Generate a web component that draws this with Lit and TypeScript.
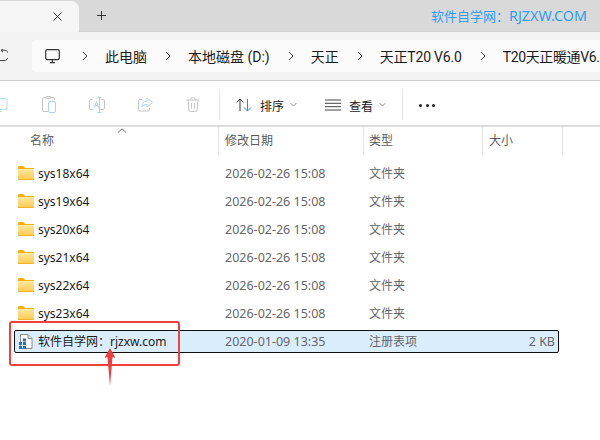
import { LitElement, html, css, svg } from "lit";
import { customElement } from "lit/decorators.js";

const folder = svg`<svg width="16" height="16" viewBox="0 0 16 16"><defs><linearGradient id="fg" x1="0" y1="0" x2="0" y2="1"><stop offset="0" stop-color="#ffe9a0"/><stop offset="1" stop-color="#fcc94e"/></linearGradient></defs><path d="M0 2.2C0 1.5.5 1 1.2 1h4l2 2H16v2H0z" fill="#f6b10f"/><path d="M0 4h16v10.2c0 .5-.4.8-.8.8H.8c-.5 0-.8-.4-.8-.8z" fill="url(#fg)"/><path d="M0 14h16v.4c0 .4-.3.6-.7.6H.7c-.4 0-.7-.3-.7-.6z" fill="#f2b124"/></svg>`;

const chevron = svg`<svg class="chev" width="6" height="10" viewBox="0 0 6 10"><path d="M1 1l4 4-4 4" fill="none" stroke="#3a3a3a" stroke-width="1"/></svg>`;

const down = svg`<svg class="down" width="7" height="5" viewBox="0 0 7 5"><path d="M.5 1l3 3 3-3" fill="none" stroke="#9a9a9a"/></svg>`;

const rows = ["sys18x64", "sys19x64", "sys20x64", "sys21x64", "sys22x64", "sys23x64"];

@customElement("app-root")
export class AppRoot extends LitElement {
  static styles = css`
    :host { display: block; width: 600px; height: 440px; overflow: hidden; position: relative; background: #fff;
      font-family: "Noto Sans", "Noto Sans CJK SC", sans-serif; font-size: 13px; color: #1c1c1c; }
    .tabs { height: 32px; background: #d9d9d9; box-sizing: border-box; display: flex; align-items: flex-start; border-bottom: 1px solid #cfcfcf; }
    .tab { width: 79px; height: 31px; margin-top: 1px; background: #f5f5f5; border-top-right-radius: 8px; display: flex; align-items: center; justify-content: flex-end; padding-right: 17px; box-sizing: border-box; flex: none; }
    .plus { margin: 11px 0 0 18px; display: block; }
    .water { margin-left: auto; margin-right: 13px; color: #2f9df4; font-size: 13px; line-height: 32px; height: 32px; }
    .water b { font-weight: 400; font-size: 14.3px; }
    .addr-row { height: 49px; box-sizing: border-box; background: #f3f3f3; border-bottom: 1px solid #cfcfcf; display: flex; padding-top: 8px; }
    .refresh { width: 32px; flex: none; overflow: hidden; display: flex; padding-top: 9px; box-sizing: border-box; height: 32px; }
    .addr { flex: 1; min-width: 0; height: 32px; background: #fbfbfb; border-radius: 4px 0 0 4px; display: flex; align-items: center; padding-left: 13px; font-family: Roboto, "Noto Sans CJK SC", sans-serif; font-size: 14px; white-space: nowrap; overflow: hidden; color: #1b1b1b; }
    .addr .pc { flex: none; margin-right: 22px; }
    .addr .chev { flex: none; margin-right: 17px; }
    .addr span { margin-right: 18px; flex: none; }
    .addr span:last-child { margin-right: 0; letter-spacing: -0.35px; }
    .addr .tight { letter-spacing: -0.2px; }
    .toolbar { height: 46px; display: flex; align-items: flex-start; padding-top: 8px; box-sizing: border-box; border-bottom: 2px solid #dcdcdc; }
    .tool-icons { width: 220px; height: 31px; box-sizing: border-box; border-right: 1px solid #e6e6e6; flex: none; display: flex; align-items: center; gap: 33px; overflow: hidden; }
    .tool-icons svg { flex: none; }
    .group { height: 31px; display: flex; align-items: center; font-size: 12px; }
    .group span { padding-top: 2px; }
    .sort { width: 89px; padding-left: 16px; box-sizing: border-box; flex: none; }
    .view { width: 93px; flex: none; padding-left: 16px; box-sizing: border-box; }
    .group svg.ic { margin-right: 8px; flex: none; }
    .group .down { margin-left: 6px; flex: none; }
    .sep { width: 1px; height: 31px; background: #e6e6e6; flex: none; }
    .more { display: flex; gap: 3.5px; margin-left: 16px; height: 31px; padding-top: 2px; box-sizing: border-box; align-items: center; }
    .more i { width: 3px; height: 3px; border-radius: 50%; background: #222; display: block; }
    .list { position: relative; }
    .head { display: grid; grid-template-columns: 219px 145px 119px 80px; height: 28px; font-size: 12px; color: #5c5c5c; }
    .head div { box-sizing: border-box; border-right: 1px solid #e5e5e5; padding-left: 6px; line-height: 27px; }
    .head div:first-child { padding-left: 30px; }
    .head div:nth-child(3) { padding-left: 5px; }
    .caret { position: absolute; left: 117px; top: 1px; }
    .rows { padding-top: 4px; }
    .row { display: grid; grid-template-columns: 18px 20px 187px 144px 1fr; height: 28px; align-items: center; color: #666; font-size: 12.5px; width: 558px; box-sizing: border-box; }
    .row .ico { grid-column: 2; display: flex; width: 16px; }
    .name { font-size: 12px; color: #1a1a1a; }
    .type { font-size: 12px; }
    .sel { margin: 3px 0 0 14px; height: 23px; width: 545px; box-sizing: border-box; border: 1px solid #111; border-radius: 2px; background: #d9edfd; display: grid; grid-template-columns: 23px 187px 144px 1fr; align-items: center; font-size: 12.5px; color: #666; padding-bottom: 1px; }
    .sel .ico { display: flex; margin-left: 3px; }
    .ts { display: flex; justify-content: space-between; align-items: center; }
    .size { padding-right: 3px; }
    .redbox { position: absolute; left: 9px; top: 321px; width: 171px; height: 45px; box-sizing: border-box; border: 2px solid #f04040; border-radius: 3px; }
    .arrow { position: absolute; left: 103px; top: 347px; }
  `;

  render() {
    return html`
      <div class="tabs">
        <div class="tab"><svg width="9" height="9" viewBox="0 0 9 9"><path d="M.5.5l8 8M8.500.5l-8 8" stroke="#333" stroke-width="1" fill="none"/></svg></div>
        <svg class="plus" width="9" height="9" viewBox="0 0 9 9"><path d="M4.500 0v9M0 4.500h9" stroke="#333" stroke-width="1" fill="none"/></svg>
        <div class="water">软件自学网：<b>RJZXW.COM</b></div>
      </div>
      <div class="addr-row">
        <div class="refresh"><svg width="8" height="13" viewBox="0 0 8 13"><path d="M1 1.200h3.500A4.500 5 0 0 1 4 11.500H0M3 0L1 1.500 3 3" fill="none" stroke="#444" stroke-width="1"/></svg></div>
        <div class="addr">
          <svg class="pc" width="15" height="15" viewBox="0 0 15 15"><rect x=".7" y=".7" width="13.6" height="10" rx="1.6" fill="none" stroke="#333" stroke-width="1.2"/><path d="M5 13.700h5M7.500 11v2.500" stroke="#333" stroke-width="1.2"/></svg>
          ${chevron}<span>此电脑</span>
          ${chevron}<span>本地磁盘 (D:)</span>
          ${chevron}<span>天正</span>
          ${chevron}<span class="tight">天正T20 V6.0</span>
          ${chevron}<span>T20天正暖通V6.</span>
        </div>
      </div>
      <div class="toolbar">
        <div class="tool-icons">
          <svg width="8" height="16" viewBox="0 0 8 16" style="margin-right:1px"><path d="M0 1.500h5.500a1.500 1.500 0 0 1 1.500 1.500v8a1.500 1.500 0 0 1-1.500 1.500H0M0 14.500h2" fill="none" stroke="#b5d9f6" stroke-width="1.100"/></svg>
          <svg width="14" height="17" viewBox="0 0 14 17"><path d="M6 15.500H2a1.500 1.500 0 0 1-1.500-1.500V3A1.500 1.500 0 0 1 2 1.500h9A1.500 1.500 0 0 1 12.500 3v1" fill="none" stroke="#c4c4c4"/><rect x="4" y=".5" width="5" height="2" rx="1" fill="#fff" stroke="#c4c4c4"/><rect x="6.500" y="5.500" width="7" height="11" rx="1.500" fill="#fff" stroke="#a5d3f7"/></svg>
          <svg width="16" height="16" viewBox="0 0 16 16"><path d="M3.500 2.500h-1.500a1.500 1.500 0 0 0-1.500 1.500v7a1.500 1.500 0 0 0 1.500 1.500h1.500M11.500 2.500h2.500a1.500 1.500 0 0 1 1.500 1.500v7a1.500 1.500 0 0 1-1.500 1.500h-2.500" fill="none" stroke="#c4c4c4"/><path d="M5.500 10.500L7.500 4.500l2 6M6.200 8.500h2.600M10.500.5v15M8.500.5h4M8.500 15.500h4" fill="none" stroke="#a5d3f7"/></svg>
          <svg width="15" height="15" viewBox="0 0 15 15"><path d="M4 2.500H2a1.500 1.500 0 0 0-1.500 1.500v8.500A1.500 1.500 0 0 0 2 14h8a1.500 1.500 0 0 0 1.500-1.500V11" fill="none" stroke="#c4c4c4"/><path d="M9 .8l5.500 4.700L9 10V7.500c-2.500 0-4 .8-5 2.500 0-4 2-6 5-6z" fill="#fff" stroke="#a5d3f7"/></svg>
          <svg width="14" height="15" viewBox="0 0 14 15"><path d="M.5 3h13M5 3V2a1.200 1.200 0 0 1 1.200-1.200h1.600A1.200 1.200 0 0 1 9 2v1M2 3l.9 10a1.500 1.500 0 0 0 1.500 1.400h5.200A1.500 1.500 0 0 0 11.100 13L12 3M5.500 6v5.500M8.500 6v5.500" fill="none" stroke="#c4c4c4"/></svg>
        </div>
        <div class="group sort">
          <svg class="ic" width="16" height="14" viewBox="0 0 16 14"><path d="M4 13V1M.5 4.500L4 1l3.500 3.500" fill="none" stroke="#333"/><path d="M11.500 1v12M8 9.500l3.500 3.500 3.500-3.500" fill="none" stroke="#2a8fe0"/></svg>
          <span>排序</span>${down}
        </div>
        <div class="group view">
          <svg class="ic" width="16" height="12" viewBox="0 0 16 12"><path d="M0 1h16M0 4.300h16M0 7.700h16M0 11h16" stroke="#444" stroke-width="1"/></svg>
          <span>查看</span>${down}
        </div>
        <div class="sep"></div>
        <div class="more"><i></i><i></i><i></i></div>
      </div>
      <div class="list">
        <div class="head"><div>名称</div><div>修改日期</div><div>类型</div><div>大小</div></div>
        <svg class="caret" width="10" height="5" viewBox="0 0 10 5"><path d="M1 4.500L5 1l4 3.500" fill="none" stroke="#777"/></svg>
        <div class="rows">
          ${rows.map(
            (r) => html`<div class="row"><div class="ico">${folder}</div><div class="name">${r}</div><div>2026-02-26 15:08</div><div class="type">文件夹</div></div>`
          )}
          <div class="sel">
            <div class="ico"><svg width="16" height="17" viewBox="0 0 16 17"><path d="M2.500 1.500h7.500l4 4v10H2.500z" fill="#fff" stroke="#8a8a8a"/><path d="M10 1.500v4h4" fill="#e8e8e8" stroke="#8a8a8a"/><path d="M1 9h3v3H1zM5 9h3v3H5zM1 13h3v3H1zM5 13h3v3H5zM5 5.500h3v3H5z" fill="#1e78c8"/></svg></div>
            <div class="name">软件自学网：rjzxw.com</div>
            <div>2020-01-09 13:35</div>
            <div class="ts"><span class="type">注册表项</span><span class="size">2 KB</span></div>
          </div>
        </div>
      </div>
      <div class="redbox"></div>
      <svg class="arrow" width="14" height="40" viewBox="0 0 14 40"><path d="M7 1L12.500 11 9.500 10 7 39 4.500 10 1.500 11z" fill="#f23c3c"/></svg>
    `;
  }
}
